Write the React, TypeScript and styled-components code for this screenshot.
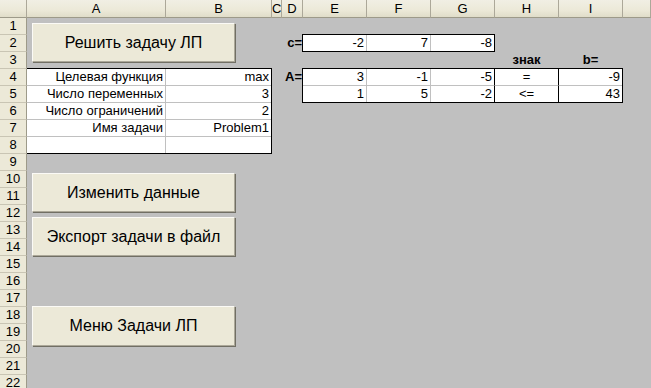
import styled, { createGlobalStyle } from 'styled-components';

const GlobalStyle = createGlobalStyle`
  html, body {
    margin: 0;
    padding: 0;
    background: #c0c0c0;
    overflow: hidden;
  }
  body {
    font-family: "Liberation Sans", Arial, sans-serif;
    font-size: 13px;
    color: #000;
  }
`;

const columns = ['A', 'B', 'C', 'D', 'E', 'F', 'G', 'H', 'I', ''];
const rowCount = 22;

const params = [
  ['Целевая функция', 'max'],
  ['Число переменных', '3'],
  ['Число ограничений', '2'],
  ['Имя задачи', 'Problem1'],
  ['', ''],
];

const costs = ['-2', '7', '-8'];

const constraints = [
  { a: ['3', '-1', '-5'], sign: '=', b: '-9' },
  { a: ['1', '5', '-2'], sign: '<=', b: '43' },
];

export default function App() {
  return (
    <>
      <GlobalStyle />
      <Sheet>
        <Corner />
        {columns.map((c, i) => (
          <ColHeader key={i} $col={i + 2}>
            {c}
          </ColHeader>
        ))}
        {Array.from({ length: rowCount }, (_, i) => (
          <RowHeader key={i} $row={i + 2}>
            {i + 1}
          </RowHeader>
        ))}

        <SheetButton $row="2 / 5" $top={5} $height={39}>
          Решить задачу ЛП
        </SheetButton>

        <ButtonStack>
          <SheetButton $height={39}>Изменить данные</SheetButton>
          <SheetButton $height={39}>Экспорт задачи в файл</SheetButton>
        </ButtonStack>

        <SheetButton $row="19 / 22" $top={-1} $height={40}>
          Меню Задачи ЛП
        </SheetButton>

        <ParamTable>
          {params.map(([label, value], i) => (
            <ParamRow key={i} $last={i === params.length - 1}>
              <Cell $line="#c0c0c0">{label}</Cell>
              <Cell>{value}</Cell>
            </ParamRow>
          ))}
        </ParamTable>

        <Label $row="3" $col="5">c=</Label>
        <CostTable>
          {costs.map((v, i) => (
            <Cell key={i} $line={i < costs.length - 1 ? '#c0c0c0' : undefined}>
              {v}
            </Cell>
          ))}
        </CostTable>

        <Label $row="4" $col="9" $align="center">знак</Label>
        <Label $row="4" $col="10" $align="center">b=</Label>
        <Label $row="5" $col="5">A=</Label>

        <Matrix>
          {constraints.map((r, ri) => {
            const bottom = ri < constraints.length - 1 ? '#c0c0c0' : undefined;
            return [
              ...r.a.map((v, ci) => (
                <Cell key={`${ri}-${ci}`} $line={ci < 2 ? '#c0c0c0' : '#000'} $bottom={bottom}>
                  {v}
                </Cell>
              )),
              <Cell key={`${ri}-s`} $line="#000" $bottom={bottom} $align="center">
                {r.sign}
              </Cell>,
              <Cell key={`${ri}-b`} $bottom={bottom}>
                {r.b}
              </Cell>,
            ];
          })}
        </Matrix>
      </Sheet>
    </>
  );
}

const Sheet = styled.div`
  display: grid;
  grid-template-columns: 27px 139px 106px 10px 21px 64px 64px 64px 64px 64px 1fr;
  grid-template-rows: 18px repeat(22, 17px);
  width: 651px;
  height: 388px;
  overflow: hidden;
  background: #c0c0c0;
`;

const headerBg = 'linear-gradient(#f1efe4 0%, #ece9d8 60%, #e0ddc9 100%)';

const Corner = styled.div`
  grid-row: 1;
  grid-column: 1;
  background: ${headerBg};
  border-right: 1px solid #aca899;
  border-bottom: 1px solid #9d9a89;
`;

const ColHeader = styled.div<{ $col: number }>`
  grid-row: 1;
  grid-column: ${(p) => p.$col};
  background: ${headerBg};
  border-right: 1px solid #aca899;
  border-bottom: 1px solid #9d9a89;
  text-align: center;
  line-height: 17px;
  overflow: hidden;
`;

const RowHeader = styled.div<{ $row: number }>`
  grid-row: ${(p) => p.$row};
  grid-column: 1;
  background: #ece9d8;
  border-right: 1px solid #9d9a89;
  border-bottom: 1px solid #c9c5b4;
  text-align: center;
  line-height: 16px;
`;

const SheetButton = styled.div<{ $row?: string; $top?: number; $height: number }>`
  grid-row: ${(p) => p.$row ?? 'auto'};
  grid-column: 2 / 4;
  align-self: start;
  margin: ${(p) => p.$top ?? 0}px 0 0 5px;
  width: 203px;
  height: ${(p) => p.$height}px;
  box-sizing: border-box;
  background: #ece9d8;
  border: 1px solid;
  border-color: #fbfaf6 #aca899 #aca899 #fbfaf6;
  box-shadow: 1px 1px 0 #716f64;
  display: flex;
  align-items: center;
  justify-content: center;
  font-size: 16px;
  white-space: nowrap;
`;

const ButtonStack = styled.div`
  grid-row: 11 / 16;
  grid-column: 2 / 4;
  display: flex;
  flex-direction: column;
  gap: 5px;
  padding-top: 2px;
`;

const ParamTable = styled.div`
  grid-row: 5 / 10;
  grid-column: 2 / 4;
  margin-top: -1px;
  display: flex;
  flex-direction: column;
  background: #fff;
  border: 1px solid #000;
  border-left: none;
`;

const ParamRow = styled.div<{ $last?: boolean }>`
  display: grid;
  grid-template-columns: 139px 1fr;
  height: ${(p) => (p.$last ? 16 : 17)}px;
  box-sizing: border-box;
  border-bottom: ${(p) => (p.$last ? 'none' : '1px solid #c0c0c0')};
`;

const Cell = styled.div<{ $line?: string; $bottom?: string; $align?: string }>`
  box-sizing: border-box;
  border-right: ${(p) => (p.$line ? `1px solid ${p.$line}` : 'none')};
  border-bottom: ${(p) => (p.$bottom ? `1px solid ${p.$bottom}` : 'none')};
  padding: 0 2px;
  text-align: ${(p) => p.$align ?? 'right'};
  line-height: 16px;
  white-space: nowrap;
  overflow: hidden;
`;

const Label = styled.div<{ $row: string; $col: string; $align?: string }>`
  grid-row: ${(p) => p.$row};
  grid-column: ${(p) => p.$col};
  font-weight: bold;
  text-align: ${(p) => p.$align ?? 'right'};
  padding-right: 1px;
  line-height: 16px;
  white-space: nowrap;
`;

const CostTable = styled.div`
  grid-row: 3;
  grid-column: 6 / 9;
  margin: -1px 0 0 -1px;
  display: grid;
  grid-template-columns: 64px 64px 1fr;
  background: #fff;
  border: 1px solid #000;
`;

const Matrix = styled.div`
  grid-row: 5 / 7;
  grid-column: 6 / 11;
  margin: -1px 0 0 -1px;
  display: grid;
  grid-template-columns: 64px 64px 64px 64px 1fr;
  grid-template-rows: 17px 1fr;
  background: #fff;
  border: 1px solid #000;
`;
